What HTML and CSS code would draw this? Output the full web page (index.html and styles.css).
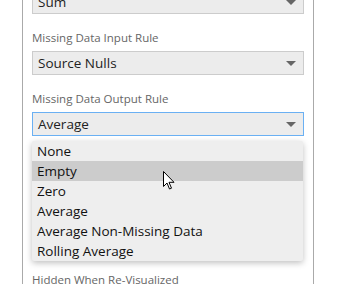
FILE: index.html
```html
<!DOCTYPE html>
<html lang="en">
<head>
  <meta charset="UTF-8" />
  <title>Missing Data Rules</title>
  <link rel="stylesheet" href="styles.css">
</head>
<body>
  <div class="panel">
    <div class="select select-first">
      <span>Sum</span>
      <i class="arrow"></i>
    </div>

    <div class="field">
      <label class="field-label">Missing Data Input Rule</label>
      <div class="select">
        <span>Source Nulls</span>
        <i class="arrow"></i>
      </div>
    </div>

    <div class="field">
      <label class="field-label">Missing Data Output Rule</label>
      <div class="select select-open">
        <span>Average</span>
        <i class="arrow"></i>
      </div>
    </div>

    <div class="field field-hidden">
      <label class="field-label">Hidden When Re-Visualized</label>
    </div>

    <ul class="dropdown">
      <li>None</li>
      <li class="hover">Empty</li>
      <li>Zero</li>
      <li>Average</li>
      <li>Average Non-Missing Data</li>
      <li>Rolling Average</li>
    </ul>

    <svg class="cursor" width="12" height="19" viewBox="0 0 12 19">
      <path d="M0.5 0.5 L0.5 15.5 L4 12 L6.5 18 L8.5 17.2 L6 11.3 L11 11.3 Z" fill="#fff" stroke="#000" stroke-width="1" stroke-linejoin="miter" />
    </svg>
  </div>
</body>
</html>
```

FILE: styles.css
```css
* {
  margin: 0;
  padding: 0;
  box-sizing: border-box;
}

body {
  font-family: 'Open Sans', 'Noto Sans', sans-serif;
  background: #fff;
  overflow: hidden;
}

.panel {
  position: relative;
  margin-left: 22px;
  margin-top: -10px;
  width: 292px;
  height: 310px;
  padding: 0 9px;
  border-left: 1px solid #aaa;
  border-right: 1px solid #aaa;
  background: #fff;
}

.field {
  margin-top: 16px;
}

.field-label {
  display: block;
  font-size: 11.5px;
  line-height: 16px;
  color: #666;
  margin-bottom: 5px;
}

.field-hidden {
  margin-top: 136px;
}

.select {
  position: relative;
  height: 24px;
  border: 1px solid #ccc;
  background: #ececec;
  padding-left: 5px;
  font-size: 13.5px;
  line-height: 22px;
  color: #222;
}

.select-open {
  border-color: #6ab0f3;
}

.arrow {
  position: absolute;
  right: 7px;
  top: 9px;
  width: 0;
  height: 0;
  border-left: 5px solid transparent;
  border-right: 5px solid transparent;
  border-top: 5px solid #666;
}

.dropdown {
  position: absolute;
  left: 9px;
  top: 151px;
  width: 271px;
  list-style: none;
  background: #eee;
  border-radius: 2px;
  box-shadow: 0 2px 6px rgba(0, 0, 0, 0.25);
}

.dropdown li {
  height: 20px;
  line-height: 20px;
  padding-left: 5px;
  font-size: 13.5px;
  color: #111;
}

.dropdown li.hover {
  background: #ccc;
}

.cursor {
  position: absolute;
  left: 140px;
  top: 181px;
}
```
